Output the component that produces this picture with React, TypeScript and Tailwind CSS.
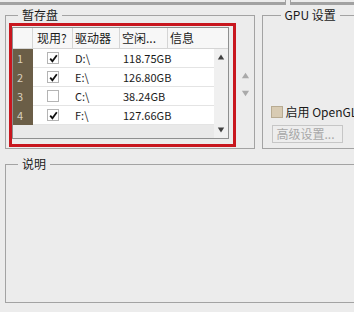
import React from "react";

const drives = [
  { n: 1, on: true, drive: "D:\\", free: "118.75GB" },
  { n: 2, on: true, drive: "E:\\", free: "126.80GB" },
  { n: 3, on: false, drive: "C:\\", free: "38.24GB" },
  { n: 4, on: true, drive: "F:\\", free: "127.66GB" },
];

const Check = ({ on }: { on: boolean }) => (
  <div className="w-[12px] h-[12px] border border-[#b4b4b4] bg-white flex items-center justify-center">
    {on && (
      <svg width="9" height="9" viewBox="0 0 9 9">
        <path d="M1.2 4.6 L3.4 7.2 L7.8 1.2" stroke="#111" strokeWidth="1.8" fill="none" />
      </svg>
    )}
  </div>
);

const Tri = ({ up, color, size }: { up: boolean; color: string; size: number }) => (
  <svg width={size} height={size} viewBox="0 0 10 10">
    <path d={up ? "M1 8 L5 2 L9 8 Z" : "M1 2 L5 8 L9 2 Z"} fill={color} />
  </svg>
);

export default function App() {
  return (
    <div
      className="w-[354px] h-[312px] overflow-hidden bg-[#ececec] text-[12px] text-[#1a1a1a]"
      style={{ fontFamily: '"Noto Sans CJK SC", "Liberation Sans", sans-serif' }}
    >
      {/* top edges of previous panels */}
      <div className="flex h-[5px]">
        <div className="w-[286px] border-b-[3px] border-r border-[#a2a2a2]" />
        <div className="w-[4px]" />
        <div className="flex-1 border-b-[3px] border-l border-[#a2a2a2]" />
      </div>

      <div className="flex w-[380px] h-[142px] mt-[2px] ml-[5px] gap-[7px]">
        {/* 暂存盘 */}
        <fieldset className="w-[257px] border border-[#a3a3a3]">
          <legend className="ml-[12px] px-1 leading-4">暂存盘</legend>
          <div className="flex items-start">
            <div className="ml-[3px] w-[227px] h-[124px] border-[3px] border-[#c8161e] pt-px">
              <div className="w-[217px] h-[112px] border border-[#8e8f8f] bg-[#e9e9e9] flex flex-col">
                <div className="flex h-[21px] bg-[#f7f7f7] border-b border-[#d5d5d5] leading-[20px]">
                  <div className="w-[20px] border-r border-[#d5d5d5]" />
                  <div className="w-[40px] border-r border-[#d5d5d5] pl-[4px]">现用?</div>
                  <div className="w-[47px] border-r border-[#d5d5d5] pl-[2px]">驱动器</div>
                  <div className="w-[48px] border-r border-[#d5d5d5] pl-[2px]">空闲...</div>
                  <div className="flex-1 pl-[2px]">信息</div>
                </div>
                <div className="flex flex-1">
                  <div className="flex-1 flex flex-col">
                    {drives.map((d) => (
                      <div key={d.n} className="flex h-[19px] leading-[18px] text-[11px]">
                        <div className="w-[20px] bg-[#6b5e47] text-[#d9d0bf] pl-[4px]">{d.n}</div>
                        <div className="flex-1 flex bg-white border-b border-[#e4e4e4]">
                          <div className="w-[40px] flex items-center justify-center">
                            <Check on={d.on} />
                          </div>
                          <div className="w-[47px] pl-[2px]">{d.drive}</div>
                          <div className="w-[48px] pl-[3px]">{d.free}</div>
                        </div>
                      </div>
                    ))}
                  </div>
                  <div className="w-[14px] bg-[#f0f0f0] flex flex-col items-center justify-between py-[4px]">
                    <Tri up color="#404040" size={8} />
                    <Tri up={false} color="#404040" size={8} />
                  </div>
                </div>
              </div>
            </div>
            <div className="ml-[5px] mt-[48px] flex flex-col gap-[9px]">
              <Tri up color="#a9a9a9" size={9} />
              <Tri up={false} color="#a9a9a9" size={9} />
            </div>
          </div>
        </fieldset>

        {/* GPU 设置 */}
        <fieldset className="flex-1 border border-[#a3a3a3] pl-[8px]">
          <legend className="ml-[10px] px-1 leading-4">GPU 设置</legend>
          <div className="mt-[83px] flex items-center h-[12px]">
            <div className="w-[12px] h-[12px] bg-[#d8cbb3] border border-[#b8ab92]" />
            <span className="ml-[3px] whitespace-nowrap">启用 OpenGL 绘图</span>
          </div>
          <div className="mt-[7px] ml-px w-[71px] h-[18px] border border-[#c6c6c6] bg-[#ededed] text-[#a8a8a8] leading-[16px] pl-[4px] whitespace-nowrap">
            高级设置...
          </div>
        </fieldset>
      </div>

      {/* 说明 */}
      <fieldset className="mt-[7px] ml-[5px] w-[380px] h-[147px] border border-[#a3a3a3]">
        <legend className="ml-[12px] px-1 leading-4">说明</legend>
      </fieldset>
    </div>
  );
}
